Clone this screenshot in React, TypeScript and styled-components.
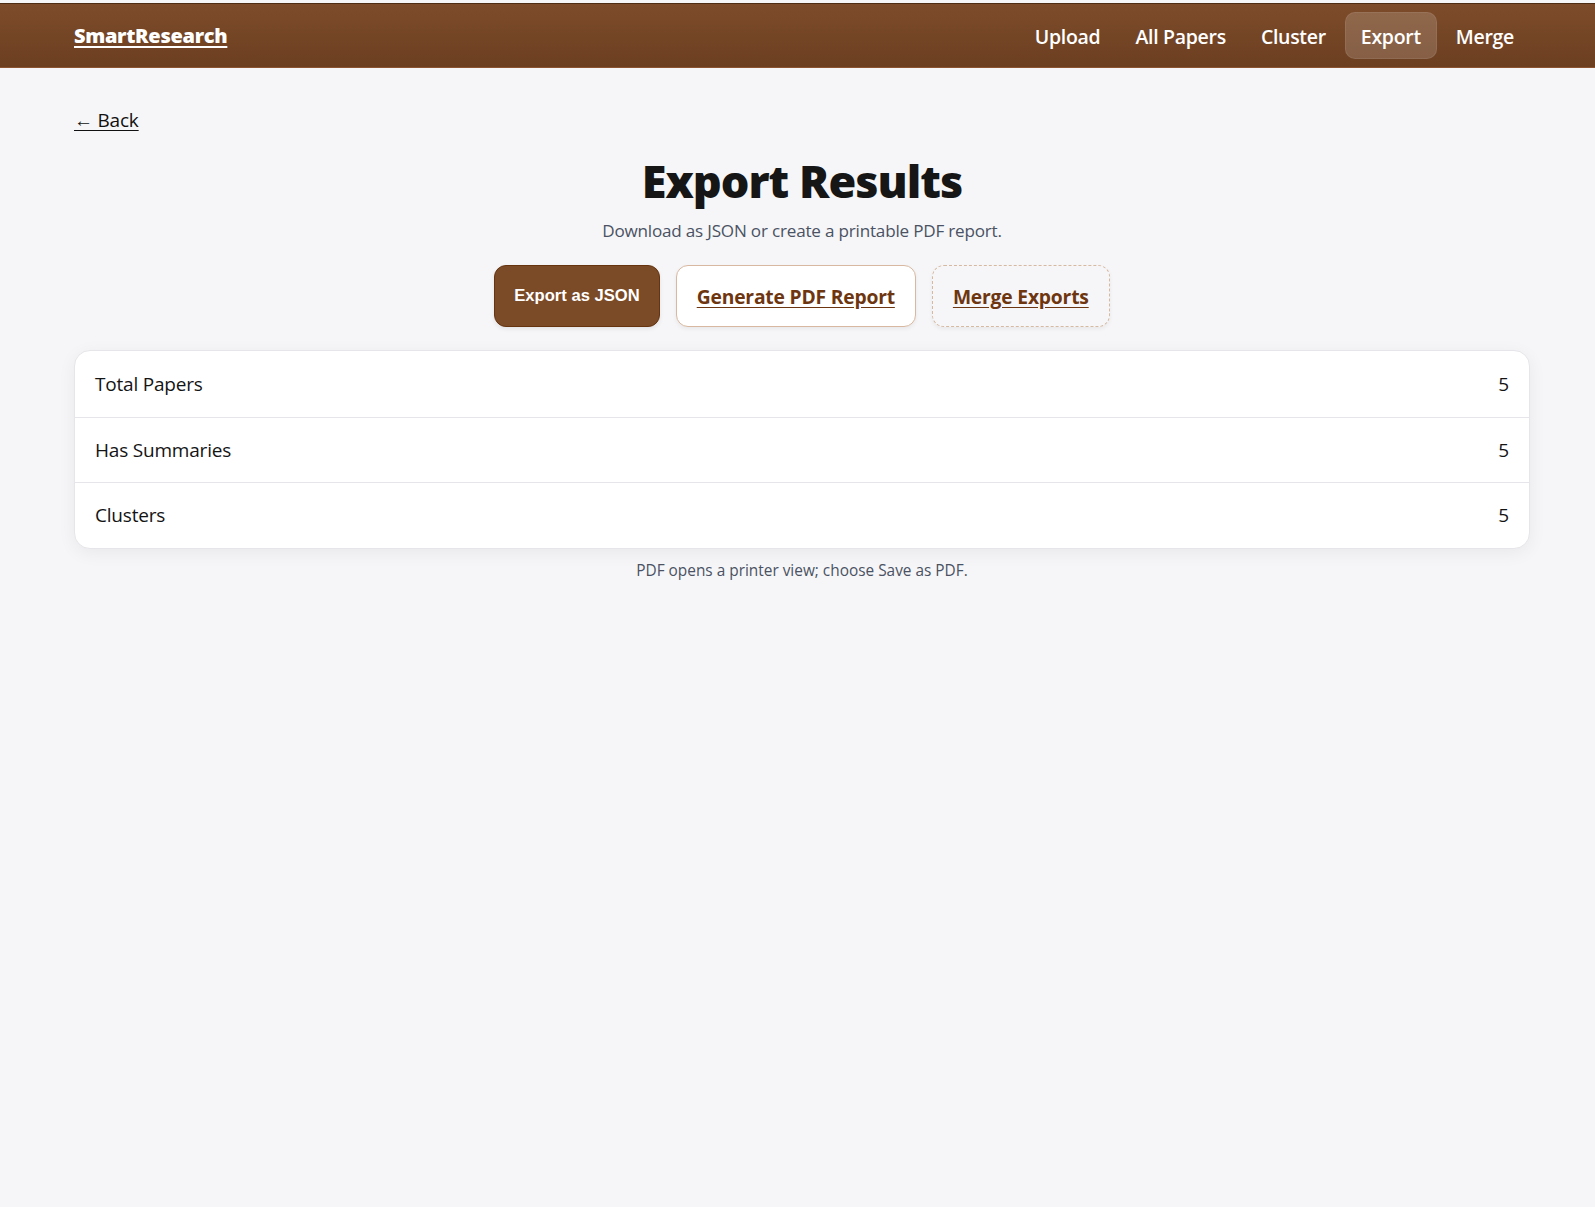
import React from "react";
import styled, { createGlobalStyle } from "styled-components";

const GlobalStyle = createGlobalStyle`
  html, body {
    margin: 0;
    padding: 0;
    background: #f6f6f8;
    font-family: "Open Sans", "Noto Sans", Arial, sans-serif;
    color: #1a1a1a;
  }
  * { box-sizing: border-box; }
`;

const Page = styled.div`
  min-height: 1207px;
  padding-top: 3px;
  background: #f6f6f8;
`;

const Header = styled.header`
  height: 65px;
  background: linear-gradient(180deg, #7d4c2a 0%, #6c3f21 100%);
  border-top: 1px solid #4f2c14;
  border-bottom: 1px solid #8a5530;
  display: flex;
  align-items: center;
  justify-content: space-between;
  padding: 0 65px 0 74px;
`;

const Logo = styled.a`
  color: #ffffff;
  font-family: "Open Sans", sans-serif;
  font-weight: 800;
  font-size: 20px;
  letter-spacing: -0.3px;
  text-decoration: underline;
  text-underline-offset: 3px;
  text-decoration-thickness: 2px;
`;

const Nav = styled.nav`
  display: flex;
  align-items: center;
  gap: 3px;
`;

const NavItem = styled.a<{ $active?: boolean }>`
  display: block;
  padding: 11px 15px 8px;
  border-radius: 10px;
  color: #ffffff;
  font-weight: 600;
  font-size: 19.5px;
  line-height: 26px;
  letter-spacing: -0.3px;
  text-decoration: none;
  background: ${(p) => (p.$active ? "rgba(255,255,255,0.16)" : "transparent")};
  border: 1px solid ${(p) => (p.$active ? "rgba(255,255,255,0.08)" : "transparent")};
`;

const Main = styled.main`
  padding: 40px 65px 0 74px;
  display: flex;
  flex-direction: column;
`;

const BackLink = styled.a`
  align-self: flex-start;
  color: #111111;
  font-size: 19px;
  line-height: 24px;
  text-decoration: underline;
  text-underline-offset: 3px;
  letter-spacing: -0.2px;
`;

const Title = styled.h1`
  margin: 19px 0 0;
  text-align: center;
  font-size: 45px;
  line-height: 60px;
  font-weight: 800;
  letter-spacing: -1px;
  color: #161616;
`;

const Subtitle = styled.p`
  margin: 9px 0 0;
  text-align: center;
  font-size: 17.1px;
  line-height: 22px;
  color: #4a5263;
  letter-spacing: -0.2px;
`;

const Actions = styled.div`
  margin-top: 23px;
  display: flex;
  justify-content: center;
  gap: 16px;
`;

const PrimaryButton = styled.button`
  height: 62px;
  padding: 0 19px;
  border-radius: 12px;
  border: 1px solid #66340f;
  background: #7b4a26;
  color: #ffffff;
  font-family: Arial, "Liberation Sans", sans-serif;
  font-weight: 700;
  font-size: 16.6px;
  box-shadow: 0 2px 4px rgba(0, 0, 0, 0.08);
  cursor: pointer;
`;

const LinkButton = styled.a<{ $dashed?: boolean }>`
  height: 62px;
  display: flex;
  align-items: center;
  padding: 0 20px;
  border-radius: 12px;
  border: 1px ${(p) => (p.$dashed ? "dashed" : "solid")} ${(p) => (p.$dashed ? "#d6b9a1" : "#d8b8a0")};
  background: ${(p) => (p.$dashed ? "transparent" : "#ffffff")};
  color: #6e3610;
  font-weight: 700;
  font-size: 19.3px;
  letter-spacing: -0.2px;
  text-decoration: underline;
  text-underline-offset: 3px;
  box-shadow: 0 2px 4px rgba(0, 0, 0, 0.06);
`;

const Card = styled.section`
  margin-top: 23px;
  background: #ffffff;
  border: 1px solid #e6e6ea;
  border-radius: 16px;
  box-shadow: 0 4px 18px rgba(20, 20, 40, 0.06);
  overflow: hidden;
`;

const Row = styled.div`
  height: 65.5px;
  display: flex;
  align-items: center;
  justify-content: space-between;
  padding: 0 20px;
  font-size: 19px;
  color: #141414;
  letter-spacing: -0.2px;
  & + & {
    border-top: 1px solid #e6e6ea;
  }
`;

const Footnote = styled.p`
  margin: 12px 0 0;
  text-align: center;
  font-size: 15.4px;
  line-height: 20px;
  color: #4a5263;
`;

const stats = [
  { label: "Total Papers", value: 5 },
  { label: "Has Summaries", value: 5 },
  { label: "Clusters", value: 5 },
];

export default function App() {
  return (
    <>
      <GlobalStyle />
      <Page>
        <Header>
          <Logo href="#">SmartResearch</Logo>
          <Nav>
            <NavItem href="#">Upload</NavItem>
            <NavItem href="#">All Papers</NavItem>
            <NavItem href="#">Cluster</NavItem>
            <NavItem href="#" $active>Export</NavItem>
            <NavItem href="#">Merge</NavItem>
          </Nav>
        </Header>
        <Main>
          <BackLink href="#">← Back</BackLink>
          <Title>Export Results</Title>
          <Subtitle>Download as JSON or create a printable PDF report.</Subtitle>
          <Actions>
            <PrimaryButton>Export as JSON</PrimaryButton>
            <LinkButton href="#">Generate PDF Report</LinkButton>
            <LinkButton href="#" $dashed>Merge Exports</LinkButton>
          </Actions>
          <Card>
            {stats.map((s) => (
              <Row key={s.label}>
                <span>{s.label}</span>
                <span>{s.value}</span>
              </Row>
            ))}
          </Card>
          <Footnote>PDF opens a printer view; choose Save as PDF.</Footnote>
        </Main>
      </Page>
    </>
  );
}
